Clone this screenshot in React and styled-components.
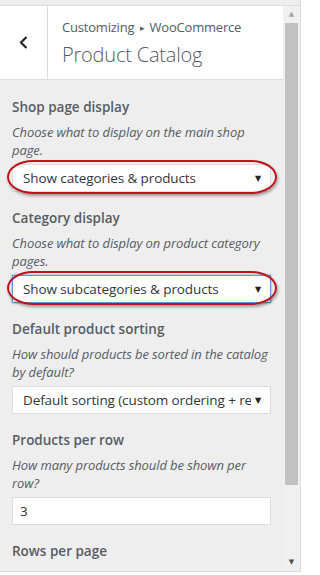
import styled, { createGlobalStyle, css } from "styled-components";

const GlobalStyle = createGlobalStyle`
  html, body {
    margin: 0;
    padding: 0;
    background: #fff;
  }
  body {
    font-family: "Open Sans", "Liberation Sans", sans-serif;
    -webkit-font-smoothing: antialiased;
  }
`;

const sections = [
    {
        label: "Shop page display",
        description: "Choose what to display on the main shop page.",
        value: "Show categories & products",
        marked: true,
    },
    {
        label: "Category display",
        description: "Choose what to display on product category pages.",
        value: "Show subcategories & products",
        marked: true,
        focused: true,
    },
    {
        label: "Default product sorting",
        description: "How should products be sorted in the catalog by default?",
        value: "Default sorting (custom ordering + relevance)",
    },
    {
        label: "Products per row",
        description: "How many products should be shown per row?",
        input: "3",
    },
    {
        label: "Rows per page",
        description: "How many rows of products should be shown per page?",
        input: "4",
    },
];

const BackIcon = () => (
    <svg width="9" height="13" viewBox="0 0 9 13">
        <polyline points="7.5,1 2,6.5 7.5,12" fill="none" stroke="#23282d" strokeWidth="2.2"/>
    </svg>
);

const App = () => {
    return (
        <>
            <GlobalStyle/>
            <Frame>
                <TopStrip/>
                <Body>
                    <Content>
                        <Header>
                            <BackButton aria-label="Back"><BackIcon/></BackButton>
                            <TitleBlock>
                                <Crumbs>Customizing <CrumbArrow>▸</CrumbArrow> WooCommerce</Crumbs>
                                <Title>Product Catalog</Title>
                            </TitleBlock>
                        </Header>
                        <Controls>
                            {sections.map((s) => (
                                <Control key={s.label}>
                                    <Label>{s.label}</Label>
                                    <Description>{s.description}</Description>
                                    <Field>
                                        {s.input ? (
                                            <TextInput>{s.input}</TextInput>
                                        ) : (
                                            <SelectBox $focused={s.focused}>
                                                <SelectValue>{s.value}</SelectValue>
                                                <SelectArrow>▼</SelectArrow>
                                            </SelectBox>
                                        )}
                                        {s.marked ? <Ring/> : null}
                                    </Field>
                                </Control>
                            ))}
                        </Controls>
                    </Content>
                    <Scrollbar>
                        <ScrollArrow $disabled>▲</ScrollArrow>
                        <ScrollThumb/>
                        <ScrollRest/>
                        <ScrollArrow>▼</ScrollArrow>
                    </Scrollbar>
                </Body>
            </Frame>
        </>
    );
}
export default App;

const Frame = styled.div`
  width: 300px;
  height: 571px;
  display: flex;
  flex-direction: column;
  background: #eee;
  border-right: 1px solid #ddd;
  border-bottom: 1px solid #ddd;
  overflow: hidden;
`;
const TopStrip = styled.div`
  height: 5px;
  flex: none;
  background: #eee;
  border-bottom: 1px solid #ddd;
`;
const Body = styled.div`
  flex: 1;
  display: flex;
  min-height: 0;
`;
const Content = styled.div`
  width: 283px;
  overflow: hidden;
`;
const Header = styled.div`
  height: 73px;
  display: flex;
  background: #fff;
  border-bottom: 1px solid #ddd;
`;
const BackButton = styled.div`
  width: 46px;
  flex: none;
  display: flex;
  align-items: center;
  justify-content: center;
  border-right: 1px solid #ddd;
  padding-right: 1px;
`;
const TitleBlock = styled.div`
  padding: 12px 0 0 14px;
  color: #555d66;
`;
const Crumbs = styled.div`
  font-size: 13px;
  line-height: 18px;
  letter-spacing: -0.2px;
`;
const CrumbArrow = styled.span`
  font-size: 9px;
  color: #555d66;
  margin: 0 2px;
  vertical-align: 1px;
`;
const Title = styled.div`
  margin-top: 5px;
  font-size: 20px;
  line-height: 26px;
  font-weight: 300;
  letter-spacing: -0.2px;
`;
const Controls = styled.div`
  padding: 18px 12px 0 12px;
`;
const Control = styled.div`
  margin-bottom: 17px;
`;
const Label = styled.div`
  font-size: 13.5px;
  line-height: 18px;
  font-weight: 600;
  color: #555d66;
  margin-bottom: 7px;
`;
const Description = styled.div`
  font-size: 13px;
  line-height: 18px;
  font-style: italic;
  color: #555d66;
  letter-spacing: -0.1px;
`;
const Field = styled.div`
  position: relative;
  margin-top: 5px;
`;
const fieldBox = css`
  height: 28px;
  box-sizing: border-box;
  background: #fff;
  border: 1px solid #ddd;
  display: flex;
  align-items: center;
  font-size: 13.5px;
  color: #32373c;
`;
const SelectBox = styled.div`
  ${fieldBox};
  padding: 0 5px 0 10px;
  ${({ $focused }) => $focused && css`
    border-color: #5b9dd9;
    box-shadow: 0 0 2px rgba(30, 140, 190, 0.8);
  `}
`;
const SelectValue = styled.span`
  flex: 1;
  overflow: hidden;
  white-space: nowrap;
  letter-spacing: -0.1px;
  margin-right: 3px;
`;
const SelectArrow = styled.span`
  flex: none;
  width: 10px;
  text-align: left;
  padding-left: 1px;
  font-size: 8px;
  color: #222;
  font-family: "DejaVu Sans", sans-serif;
`;
const TextInput = styled.div`
  ${fieldBox};
  padding: 0 7px;
`;
const Ring = styled.div`
  position: absolute;
  top: -4px;
  bottom: -2px;
  left: -5px;
  right: -6px;
  border: 2px solid #c0141c;
  border-radius: 26px / 17px;
  box-shadow: 1px 2px 3px rgba(0, 0, 0, 0.35);
  pointer-events: none;
`;
const Scrollbar = styled.div`
  width: 17px;
  flex: none;
  display: flex;
  flex-direction: column;
  align-items: center;
  background: #f0f0f0;
`;
const ScrollArrow = styled.div`
  height: 17px;
  flex: none;
  font-family: "DejaVu Sans", sans-serif;
  font-size: 7px;
  line-height: 17px;
  color: ${({ $disabled }) => ($disabled ? "#a3a3a3" : "#505050")};
`;
const ScrollThumb = styled.div`
  width: 13px;
  height: 462px;
  flex: none;
  background: #c1c1c1;
`;
const ScrollRest = styled.div`
  flex: 1;
`;
